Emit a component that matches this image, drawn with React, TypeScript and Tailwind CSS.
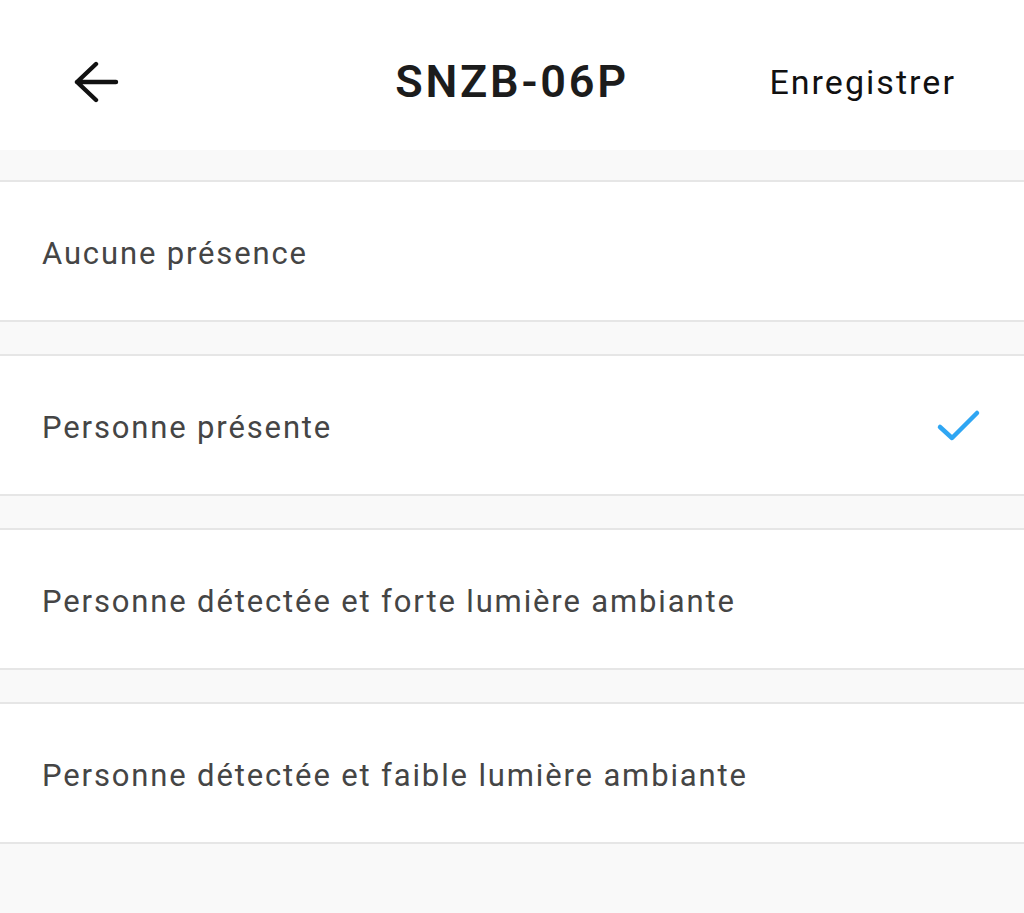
const options = [
  { label: 'Aucune présence', selected: false },
  { label: 'Personne présente', selected: true },
  { label: 'Personne détectée et forte lumière ambiante', selected: false },
  { label: 'Personne détectée et faible lumière ambiante', selected: false },
];

function BackArrow() {
  return (
    <svg width="46" height="42" viewBox="0 0 46 42" fill="none" className="text-[#111]">
      <path d="M23 3 L4 21 L23 39 M4 21 H43" stroke="currentColor" strokeWidth="4.4" strokeLinecap="round" strokeLinejoin="round" />
    </svg>
  );
}

function CheckMark() {
  return (
    <svg width="48" height="40" viewBox="0 0 48 40" fill="none" className="text-[#2fa6f3]">
      <path d="M4 19 L16 30 L41 5" stroke="currentColor" strokeWidth="4.5" strokeLinecap="round" strokeLinejoin="round" />
    </svg>
  );
}

export default function App() {
  return (
    <div className="min-h-[913px] bg-[#f9f9f9] font-['Roboto',sans-serif]">
      <header className="h-[150px] bg-white flex items-center justify-between pt-[14px] pl-[73px] pr-[70px] relative">
        <BackArrow />
        <h1 className="absolute left-0 right-0 text-center text-[45px] font-semibold tracking-[0.06em] text-[#1c1c1c] pointer-events-none">
          SNZB-06P
        </h1>
        <button type="button" className="text-[34px] text-[#111] tracking-[0.06em] -mr-[2px]">
          Enregistrer
        </button>
      </header>
      <div className="flex flex-col gap-[32px] pt-[30px]">
        {options.map((o) => (
          <div
            key={o.label}
            className="h-[142px] bg-white border-y-2 border-[#e6e6e6] flex items-center justify-between pt-[6px] pl-[42px] pr-[40px]"
          >
            <span className="text-[31px] tracking-[0.06em] text-[#454545]">{o.label}</span>
            {o.selected && <CheckMark />}
          </div>
        ))}
      </div>
    </div>
  );
}
